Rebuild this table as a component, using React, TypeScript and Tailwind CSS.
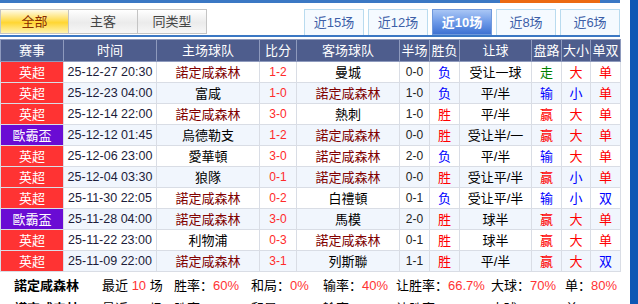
import React from "react";

type Row = {
  league: string;
  time: string;
  home: string;
  score: string;
  away: string;
  half: string;
  result: string;
  handicap: string;
  pan: string;
  size: string;
  odd: string;
};

const TEAM = "諾定咸森林";

const rows: Row[] = [
  { league: "英超", time: "25-12-27 20:30", home: TEAM, score: "1-2", away: "曼城", half: "0-0", result: "负", handicap: "受让一球", pan: "走", size: "大", odd: "单" },
  { league: "英超", time: "25-12-23 04:00", home: "富咸", score: "1-0", away: TEAM, half: "1-0", result: "负", handicap: "平/半", pan: "输", size: "小", odd: "单" },
  { league: "英超", time: "25-12-14 22:00", home: TEAM, score: "3-0", away: "熱刺", half: "1-0", result: "胜", handicap: "平/半", pan: "赢", size: "大", odd: "单" },
  { league: "歐霸盃", time: "25-12-12 01:45", home: "烏德勒支", score: "1-2", away: TEAM, half: "0-0", result: "胜", handicap: "受让半/一", pan: "赢", size: "大", odd: "单" },
  { league: "英超", time: "25-12-06 23:00", home: "愛華頓", score: "3-0", away: TEAM, half: "2-0", result: "负", handicap: "平/半", pan: "输", size: "大", odd: "单" },
  { league: "英超", time: "25-12-04 03:30", home: "狼隊", score: "0-1", away: TEAM, half: "0-0", result: "胜", handicap: "受让平/半", pan: "赢", size: "小", odd: "单" },
  { league: "英超", time: "25-11-30 22:05", home: TEAM, score: "0-2", away: "白禮頓", half: "0-1", result: "负", handicap: "受让平/半", pan: "输", size: "小", odd: "双" },
  { league: "歐霸盃", time: "25-11-28 04:00", home: TEAM, score: "3-0", away: "馬模", half: "2-0", result: "胜", handicap: "球半", pan: "赢", size: "大", odd: "单" },
  { league: "英超", time: "25-11-22 23:00", home: "利物浦", score: "0-3", away: TEAM, half: "0-1", result: "胜", handicap: "球半", pan: "赢", size: "大", odd: "单" },
  { league: "英超", time: "25-11-09 22:00", home: TEAM, score: "3-1", away: "列斯聯", half: "1-1", result: "胜", handicap: "平/半", pan: "赢", size: "大", odd: "双" },
];

const headers = ["赛事", "时间", "主场球队", "比分", "客场球队", "半场", "胜负", "让球", "盘路", "大小", "单双"];
const widths = [63, 93, 103, 37, 103, 30, 30, 72, 30, 29, 30];

const redBlue = (v: string) =>
  v === "胜" || v === "赢" || v === "大" || v === "单"
    ? "text-[#ff0000]"
    : v === "走"
    ? "text-[#008000]"
    : "text-[#0000ff]";

const teamColor = (t: string) => (t === TEAM ? "text-[#800000]" : "text-black");

function Stat({ label, value, className }: { label: string; value: string; className: string }) {
  return (
    <span className={`shrink-0 whitespace-nowrap ${className}`}>
      {label}：<span className="text-[#ff3333]">{value}</span>
    </span>
  );
}

export default function App() {
  return (
    <div className="w-[638px] h-[304px] overflow-hidden bg-white flex font-[Liberation_Sans,Noto_Sans_CJK_SC,sans-serif] text-[12px] leading-none">
      <div className="w-[620px] flex flex-col">
        {/* top strip */}
        <div className="h-[3px] shrink-0 bg-[#3b78c4] flex">
          <div className="ml-[500px] w-[100px] bg-[#ec6a12]" />
        </div>

        {/* tabs */}
        <div className="mt-[6px] h-[26px] shrink-0 flex items-start">
          <div className="flex h-[25px] text-[13px]">
            <div className="w-[69px] flex items-center justify-center border border-[#c4c4c4] bg-[linear-gradient(#fffbe6,#ffd633_55%,#fff3b0)] text-[#8a2c00]">
              全部
            </div>
            <div className="w-[69px] flex items-center justify-center border border-l-0 border-[#c4c4c4] bg-[linear-gradient(#ffffff,#ebebeb_55%,#f7f7f7)] text-[#444]">
              主客
            </div>
            <div className="w-[69px] flex items-center justify-center border border-l-0 border-[#c4c4c4] bg-[linear-gradient(#ffffff,#ebebeb_55%,#f7f7f7)] text-[#444]">
              同类型
            </div>
          </div>
          <div className="ml-auto flex gap-[4px] text-[13px]">
            {["近15场", "近12场", "近10场", "近8场", "近6场"].map((t) =>
              t === "近10场" ? (
                <div
                  key={t}
                  className="w-[60px] h-[26px] flex items-center justify-center border border-[#6f98dc] bg-[linear-gradient(#a9c6f5,#6e9ae8_50%,#3f72d2)] text-white font-bold"
                >
                  {t}
                </div>
              ) : (
                <div
                  key={t}
                  className="w-[60px] h-[26px] flex items-center justify-center border border-b-0 border-[#b9dbef] bg-[#f5faff] text-[#3d5fa8]"
                >
                  {t}
                </div>
              )
            )}
          </div>
        </div>

        <div className="h-[2px] shrink-0 bg-[#3b78c4]" />
        <div className="h-[2px] shrink-0" />

        {/* table */}
        <table className="table-fixed border-collapse w-[620px] shrink-0">
          <colgroup>
            {widths.map((w, i) => (
              <col key={i} style={{ width: w }} />
            ))}
          </colgroup>
          <thead>
            <tr className="h-[22px] bg-[#4e5d8d] text-white text-[13px]">
              {headers.map((h) => (
                <th key={h} className="font-normal border border-[#8e9abd] p-0">
                  {h}
                </th>
              ))}
            </tr>
          </thead>
          <tbody>
            {rows.map((r, i) => (
              <tr key={i} className={`h-[21px] text-center ${i % 2 === 0 ? "bg-white" : "bg-[#f1f6fd]"}`}>
                <td
                  className={`p-0 border border-[#d9dde5] text-white text-[13px] ${
                    r.league === "英超" ? "bg-[#ff3333]" : "bg-[#6a0bd4]"
                  }`}
                >
                  {r.league}
                </td>
                <td className="p-0 border border-[#d9dde5] text-[#1c1c3a] text-[12.5px]">{r.time}</td>
                <td className={`p-0 border border-[#d9dde5] text-[13px] ${teamColor(r.home)}`}>{r.home}</td>
                <td className="p-0 border border-[#d9dde5] text-[#ff2a2a]">{r.score}</td>
                <td className={`p-0 border border-[#d9dde5] text-[13px] ${teamColor(r.away)}`}>{r.away}</td>
                <td className="p-0 border border-[#d9dde5] text-[#222]">{r.half}</td>
                <td className={`p-0 border border-[#d9dde5] text-[13px] ${redBlue(r.result)}`}>{r.result}</td>
                <td className="p-0 border border-[#d9dde5] text-[13px] text-black">{r.handicap}</td>
                <td className={`p-0 border border-[#d9dde5] text-[13px] ${redBlue(r.pan)}`}>{r.pan}</td>
                <td className={`p-0 border border-[#d9dde5] text-[13px] ${redBlue(r.size)}`}>{r.size}</td>
                <td className={`p-0 border border-[#d9dde5] text-[13px] ${redBlue(r.odd)}`}>{r.odd}</td>
              </tr>
            ))}
          </tbody>
        </table>

        {/* summary */}
        {[TEAM, TEAM].map((name, i) => (
          <div key={i} className="h-[20px] shrink-0 flex items-center text-[13px] text-black mt-[3px]">
            <span className="shrink-0 ml-[14px] w-[88px] font-bold">{name}</span>
            <span className="shrink-0 w-[72px] whitespace-nowrap">
              最近 <span className="text-[#ff3333]">10</span> 场
            </span>
            <Stat label="胜率" value="60%" className="w-[77px]" />
            <Stat label="和局" value="0%" className="w-[72px]" />
            <Stat label="输率" value="40%" className="w-[73px]" />
            <Stat label="让胜率" value="66.7%" className="w-[95px]" />
            <Stat label="大球" value="70%" className="w-[74px]" />
            <Stat label="单" value="80%" className="" />
          </div>
        ))}
      </div>
      <div className="w-[10px] shrink-0" />
      <div className="w-[8px] shrink-0 bg-[#0d57b4]" />
    </div>
  );
}
